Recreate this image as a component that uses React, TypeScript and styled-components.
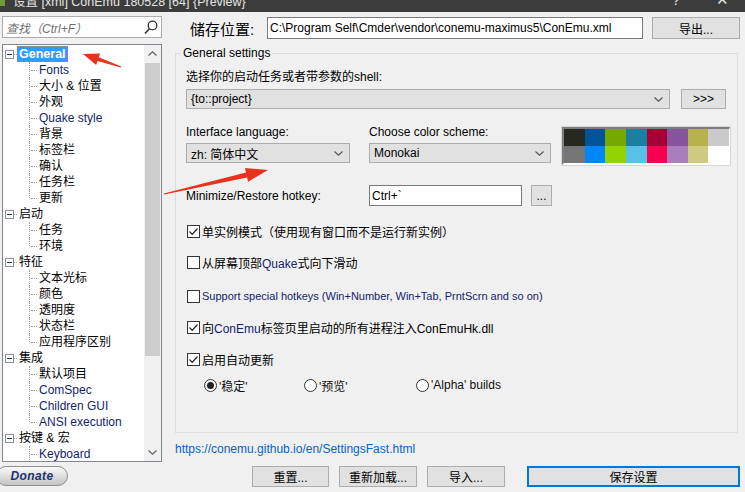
import { FC } from "react";
import styled, { createGlobalStyle, css } from "styled-components";

const GlobalStyle = createGlobalStyle`
  body {
    margin: 0;
    background: #f0f0f0;
    font-family: "Liberation Sans", "Noto Sans CJK SC", sans-serif;
    font-size: 12px;
    color: #000;
  }
`;

const FONT = `"Liberation Sans", "Noto Sans CJK SC", sans-serif`;
const NAVY = "#13236e";

const Window = styled.div`
  position: relative;
  width: 745px;
  height: 492px;
  overflow: hidden;
  background: #f0f0f0;
  font-family: ${FONT};
  font-size: 12px;
`;

/* ---------- title bar (cut off at top) ---------- */

const TitleBar = styled.div`
  display: flex;
  height: 12px;
  overflow: hidden;
  background: #3c3c3c;
  color: #e4e4e4;
`;

const AppIcon = styled.div`
  width: 5px;
  height: 6px;
  background: #6f9a3a;
`;

const TitleText = styled.div`
  margin: -6px 0 0 8px;
  line-height: 16px;
  font-size: 12.5px;
  white-space: nowrap;
`;

const CaptionButtons = styled.div`
  display: flex;
  margin-left: auto;
`;

const CaptionButton = styled.div`
  width: 46px;
  margin-top: -9px;
  line-height: 18px;
  font-size: 15px;
  text-align: center;
`;

/* ---------- body ---------- */

const Body = styled.div`
  display: grid;
  grid-template-columns: 160px 1fr;
  column-gap: 13px;
  padding-left: 2px;
  height: 480px;
`;

const Sidebar = styled.div`
  display: flex;
  flex-direction: column;
  padding-top: 4px;
`;

const SearchBox = styled.div`
  display: flex;
  align-items: center;
  height: 22px;
  box-sizing: border-box;
  padding: 0 3px 0 3px;
  background: #fff;
  border: 1px solid #abadb3;
`;

const SearchHint = styled.span`
  flex: 1;
  font-style: italic;
  color: #707070;
`;

const Tree = styled.div`
  display: flex;
  margin-top: 6px;
  height: 418px;
  box-sizing: border-box;
  overflow: hidden;
  background: #fff;
  border: 1px solid #828790;
`;

const TreeList = styled.div`
  flex: 1;
  padding-top: 1px;
`;

const Row = styled.div`
  display: flex;
  align-items: center;
  height: 16px;
  padding-left: 2px;
`;

const Expander = styled.span`
  position: relative;
  width: 9px;
  height: 9px;
  box-sizing: border-box;
  border: 1px solid #8f8f8f;
  background: #fff;

  &::after {
    content: "";
    position: absolute;
    left: 1px;
    top: 3px;
    width: 5px;
    height: 1px;
    background: #1a2f86;
  }
`;

const Connector = styled.span`
  width: 3px;
  border-top: 1px dotted #a0a0a0;
`;

const Guide = styled.span<{ $last?: boolean }>`
  position: relative;
  align-self: flex-start;
  margin-left: 24px;
  width: 7px;
  height: ${(p) => (p.$last ? "8px" : "16px")};
  border-left: 1px dotted #a0a0a0;

  &::after {
    content: "";
    position: absolute;
    left: 1px;
    top: 8px;
    width: 6px;
    border-top: 1px dotted #a0a0a0;
  }
`;

const TreeLabel = styled.span<{ $en?: boolean; $selected?: boolean }>`
  padding: 0 1px;
  line-height: 14px;
  border: 1px solid transparent;
  white-space: nowrap;
  color: ${(p) => (p.$en ? NAVY : "#000")};
  ${(p) =>
    p.$selected &&
    css`
      background: #3399ff;
      color: #fff;
      font-weight: bold;
      font-size: 12.5px;
      border: 1px dotted #c8821e;
    `}
`;

const Scrollbar = styled.div`
  display: flex;
  flex-direction: column;
  width: 17px;
  background: #f0f0f0;
`;

const ScrollArrow = styled.div`
  display: flex;
  align-items: center;
  justify-content: center;
  height: 17px;
`;

const ScrollThumb = styled.div`
  margin: 1px 1px 0 1px;
  height: 293px;
  background: #cdcdcd;
`;

const ScrollTrack = styled.div`
  flex: 1;
`;

const DonateButton = styled.div`
  display: flex;
  align-items: center;
  justify-content: center;
  margin: 4px 0 0 -6px;
  width: 72px;
  height: 20px;
  box-sizing: border-box;
  border: 1px solid #8e8e8e;
  border-radius: 10px;
  background: linear-gradient(#fafafa, #dcdcdc 55%, #c4c4c4);
  color: #1d3570;
  font-weight: bold;
  font-style: italic;
  letter-spacing: 0.4px;
`;

/* ---------- main panel ---------- */

const Main = styled.div`
  display: flex;
  flex-direction: column;
  padding: 5px 5px 0 0;
`;

const PathRow = styled.div`
  display: flex;
  align-items: center;
  height: 22px;
`;

const PathLabel = styled.span`
  width: 92px;
  box-sizing: border-box;
  padding-left: 15px;
  font-size: 15px;
`;

const TextInput = styled.div<{ $w: number; $h?: number }>`
  display: flex;
  align-items: center;
  width: ${(p) => p.$w}px;
  height: ${(p) => p.$h ?? 22}px;
  box-sizing: border-box;
  padding-left: 2px;
  background: #fff;
  border: 1px solid #7a7a7a;
  white-space: nowrap;
`;

const Button = styled.div<{ $w: number; $h?: number; $primary?: boolean }>`
  display: flex;
  align-items: center;
  justify-content: center;
  width: ${(p) => p.$w}px;
  height: ${(p) => p.$h ?? 21}px;
  box-sizing: border-box;
  background: #e1e1e1;
  border: ${(p) => (p.$primary ? "2px solid #0078d7" : "1px solid #adadad")};
  white-space: nowrap;
`;

const Group = styled.fieldset`
  margin: 7px 2px 0 0;
  padding: 0 10px;
  height: 387px;
  box-sizing: border-box;
  border: 1px solid #dcdcdc;
  min-width: 0;
`;

const Legend = styled.legend`
  margin-left: -5px;
  padding: 0 2px;
  line-height: 14px;
`;

const FieldLabel = styled.div<{ $mt?: number }>`
  margin-top: ${(p) => p.$mt ?? 0}px;
  line-height: 14px;
  white-space: nowrap;
`;

const ShellRow = styled.div`
  display: flex;
  gap: 11px;
  margin-top: 5px;
`;

const Combo = styled.div<{ $w?: number }>`
  display: flex;
  align-items: center;
  justify-content: space-between;
  width: ${(p) => (p.$w ? `${p.$w}px` : "100%")};
  height: 20px;
  box-sizing: border-box;
  padding: 0 6px 0 4px;
  background: #e1e1e1;
  border: 1px solid #adadad;
`;

const SchemeRow = styled.div`
  display: grid;
  grid-template-columns: 164px 182px 171px;
  margin-top: 16px;

  & > :nth-child(2) {
    margin-left: 19px;
    width: 182px;
  }
  & > :nth-child(3) {
    margin-left: 30px;
  }
`;

const FieldCol = styled.div`
  display: flex;
  flex-direction: column;
  gap: 4px;
`;

const Palette = styled.div`
  display: grid;
  grid-template-columns: repeat(8, 1fr);
  grid-template-rows: 1fr 1fr;
  margin-top: 2px;
  width: 168px;
  height: 38px;
  box-sizing: border-box;
  border-top: 2px solid #7d7d7d;
  border-left: 2px solid #7d7d7d;
  border-right: 1px solid #fff;
  border-bottom: 2px solid #fff;
  outline: 1px solid #d6d6d6;
`;

const Swatch = styled.div<{ $c: string }>`
  background: ${(p) => p.$c};
`;

const HotkeyRow = styled.div`
  display: flex;
  align-items: center;
  margin-top: 20px;
`;

const HotkeyLabel = styled.span`
  width: 183px;
`;

const CheckRow = styled.div<{ $mt: number }>`
  display: flex;
  align-items: center;
  gap: 2px;
  height: 14px;
  margin-top: ${(p) => p.$mt}px;
  padding-left: 1px;
  white-space: nowrap;
`;

const CheckBox = styled.span`
  display: flex;
  align-items: center;
  justify-content: center;
  width: 13px;
  height: 13px;
  box-sizing: border-box;
  border: 1px solid #333;
  background: #fff;
`;

const En = styled.span`
  color: ${NAVY};
`;

const Small = styled.span`
  color: ${NAVY};
  font-size: 11px;
`;

const RadioRow = styled.div`
  display: flex;
  align-items: center;
  height: 14px;
  margin-top: 12px;
  padding-left: 18px;
`;

const RadioItem = styled.div<{ $w?: number }>`
  display: flex;
  align-items: center;
  gap: 2px;
  width: ${(p) => (p.$w ? `${p.$w}px` : "auto")};
  color: #111;
  white-space: nowrap;
`;

const RadioCircle = styled.span<{ $on?: boolean }>`
  display: flex;
  align-items: center;
  justify-content: center;
  width: 13px;
  height: 13px;
  box-sizing: border-box;
  border: 1px solid #333;
  border-radius: 50%;
  background: #fff;

  &::after {
    content: "";
    width: 7px;
    height: 7px;
    border-radius: 50%;
    background: ${(p) => (p.$on ? "#222" : "transparent")};
  }
`;

const Link = styled.div`
  margin-top: 9px;
  line-height: 14px;
  color: #0066cc;
`;

const ButtonBar = styled.div`
  display: flex;
  justify-content: flex-end;
  margin-top: 10px;
  gap: 10px;

  & > :last-child {
    margin-left: 12px;
  }
`;

const Overlay = styled.svg`
  position: absolute;
  left: 0;
  top: 0;
  pointer-events: none;
`;

/* ---------- data ---------- */

type Node = { t: string; top?: boolean; en?: boolean; last?: boolean; sel?: boolean };

const nodes: Node[] = [
  { t: "General", top: true, sel: true },
  { t: "Fonts", en: true },
  { t: "大小 & 位置" },
  { t: "外观" },
  { t: "Quake style", en: true },
  { t: "背景" },
  { t: "标签栏" },
  { t: "确认" },
  { t: "任务栏" },
  { t: "更新", last: true },
  { t: "启动", top: true },
  { t: "任务" },
  { t: "环境", last: true },
  { t: "特征", top: true },
  { t: "文本光标" },
  { t: "颜色" },
  { t: "透明度" },
  { t: "状态栏" },
  { t: "应用程序区别", last: true },
  { t: "集成", top: true },
  { t: "默认项目" },
  { t: "ComSpec", en: true },
  { t: "Children GUI", en: true },
  { t: "ANSI execution", en: true, last: true },
  { t: "按键 & 宏", top: true },
  { t: "Keyboard", en: true },
];

const palette = [
  "#272822", "#01549a", "#75a800", "#1a7fa0", "#a60034", "#87559c", "#b8b24d", "#cacaca",
  "#767676", "#0086fa", "#92d300", "#58c2e6", "#f80050", "#a97ebd", "#cfcc82", "#ffffff",
];

const arrowPoints = (
  tx: number, ty: number, hx: number, hy: number,
  headLen: number, headW: number, shaft: number
): string => {
  const len = Math.hypot(hx - tx, hy - ty);
  const dx = (hx - tx) / len;
  const dy = (hy - ty) / len;
  const nx = -dy;
  const ny = dx;
  const bx = hx - dx * headLen;
  const by = hy - dy * headLen;
  const pts = [
    [tx + nx * 0.6, ty + ny * 0.6],
    [bx + (nx * shaft) / 2, by + (ny * shaft) / 2],
    [bx + (nx * headW) / 2, by + (ny * headW) / 2],
    [hx, hy],
    [bx - (nx * headW) / 2, by - (ny * headW) / 2],
    [bx - (nx * shaft) / 2, by - (ny * shaft) / 2],
    [tx - nx * 0.6, ty - ny * 0.6],
  ];
  return pts.map((p) => p.map((v) => v.toFixed(1)).join(",")).join(" ");
};

const Chevron: FC<{ up?: boolean; color?: string }> = ({ up, color = "#555" }) => (
  <svg width="9" height="5" viewBox="0 0 9 5">
    <polyline
      points={up ? "0.5,4.5 4.5,0.8 8.5,4.5" : "0.5,0.5 4.5,4.2 8.5,0.5"}
      fill="none"
      stroke={color}
      strokeWidth="1.2"
    />
  </svg>
);

const Tick: FC = () => (
  <svg width="11" height="11" viewBox="0 0 11 11">
    <polyline points="1.5,5.5 4.2,8.3 9.5,2.5" fill="none" stroke="#222" strokeWidth="1.2" />
  </svg>
);

const Check: FC<{ on?: boolean; mt: number; children: React.ReactNode }> = ({ on, mt, children }) => (
  <CheckRow $mt={mt}>
    <CheckBox>{on && <Tick />}</CheckBox>
    <span>{children}</span>
  </CheckRow>
);

const App: FC = () => {
  return (
    <Window>
      <GlobalStyle />
      <TitleBar>
        <AppIcon />
        <TitleText>设置 [xml] ConEmu 180528 [64] {"{Preview}"}</TitleText>
        <CaptionButtons>
          <CaptionButton>?</CaptionButton>
          <CaptionButton>✕</CaptionButton>
        </CaptionButtons>
      </TitleBar>

      <Body>
        <Sidebar>
          <SearchBox>
            <SearchHint>查找（Ctrl+F）</SearchHint>
            <svg width="14" height="15" viewBox="0 0 14 15">
              <circle cx="8.5" cy="5.5" r="4.3" fill="none" stroke="#333" strokeWidth="1.3" />
              <line x1="5.4" y1="8.7" x2="1" y2="13.5" stroke="#333" strokeWidth="1.6" />
            </svg>
          </SearchBox>

          <Tree>
            <TreeList>
              {nodes.map((n) =>
                n.top ? (
                  <Row key={n.t}>
                    <Expander />
                    <Connector />
                    <TreeLabel $selected={n.sel}>{n.t}</TreeLabel>
                  </Row>
                ) : (
                  <Row key={n.t}>
                    <Guide $last={n.last} />
                    <TreeLabel $en={n.en}>{n.t}</TreeLabel>
                  </Row>
                )
              )}
            </TreeList>
            <Scrollbar>
              <ScrollArrow>
                <Chevron up color="#606060" />
              </ScrollArrow>
              <ScrollThumb />
              <ScrollTrack />
              <ScrollArrow>
                <Chevron color="#606060" />
              </ScrollArrow>
            </Scrollbar>
          </Tree>

          <DonateButton>Donate</DonateButton>
        </Sidebar>

        <Main>
          <PathRow>
            <PathLabel>储存位置:</PathLabel>
            <TextInput $w={376}>C:\Program Self\Cmder\vendor\conemu-maximus5\ConEmu.xml</TextInput>
            <Button $w={88} $h={22} style={{ marginLeft: 9 }}>
              导出...
            </Button>
          </PathRow>

          <Group>
            <Legend>General settings</Legend>
            <FieldLabel $mt={10}>选择你的启动任务或者带参数的shell:</FieldLabel>
            <ShellRow>
              <Combo $w={484}>
                <span>{"{to::project}"}</span>
                <Chevron />
              </Combo>
              <Button $w={45} $h={20}>
                &gt;&gt;&gt;
              </Button>
            </ShellRow>

            <SchemeRow>
              <FieldCol>
                <FieldLabel>Interface language:</FieldLabel>
                <Combo>
                  <span>zh: 简体中文</span>
                  <Chevron />
                </Combo>
              </FieldCol>
              <FieldCol>
                <FieldLabel>Choose color scheme:</FieldLabel>
                <Combo>
                  <span>Monokai</span>
                  <Chevron />
                </Combo>
              </FieldCol>
              <Palette>
                {palette.map((c, i) => (
                  <Swatch key={i} $c={c} />
                ))}
              </Palette>
            </SchemeRow>

            <HotkeyRow>
              <HotkeyLabel>Minimize/Restore hotkey:</HotkeyLabel>
              <TextInput $w={153} $h={21}>
                Ctrl+`
              </TextInput>
              <Button $w={21} style={{ marginLeft: 9 }}>
                ...
              </Button>
            </HotkeyRow>

            <Check on mt={18}>
              单实例模式（使用现有窗口而不是运行新实例）
            </Check>
            <Check mt={17}>
              从屏幕顶部<En>Quake</En>式向下滑动
            </Check>
            <Check mt={20}>
              <Small>Support special hotkeys (Win+Number, Win+Tab, PrntScrn and so on)</Small>
            </Check>
            <Check on mt={17}>
              向<En>ConEmu</En>标签页里启动的所有进程注入ConEmuHk.dll
            </Check>
            <Check on mt={18}>
              启用自动更新
            </Check>
            <RadioRow>
              <RadioItem $w={100}>
                <RadioCircle $on />
                '稳定'
              </RadioItem>
              <RadioItem $w={112}>
                <RadioCircle />
                '预览'
              </RadioItem>
              <RadioItem>
                <RadioCircle />
                'Alpha' builds
              </RadioItem>
            </RadioRow>
          </Group>

          <Link>https://conemu.github.io/en/SettingsFast.html</Link>

          <ButtonBar>
            <Button $w={77}>重置...</Button>
            <Button $w={78}>重新加载...</Button>
            <Button $w={78}>导入...</Button>
            <Button $w={213} $primary>
              保存设置
            </Button>
          </ButtonBar>
        </Main>
      </Body>

      <Overlay width={745} height={492}>
        <polygon points={arrowPoints(121, 67, 83, 54, 16, 12, 4)} fill="#e8321e" />
        <polygon points={arrowPoints(164, 194, 268, 170, 22, 14, 5)} fill="#e8321e" />
      </Overlay>
    </Window>
  );
};

export default App;
